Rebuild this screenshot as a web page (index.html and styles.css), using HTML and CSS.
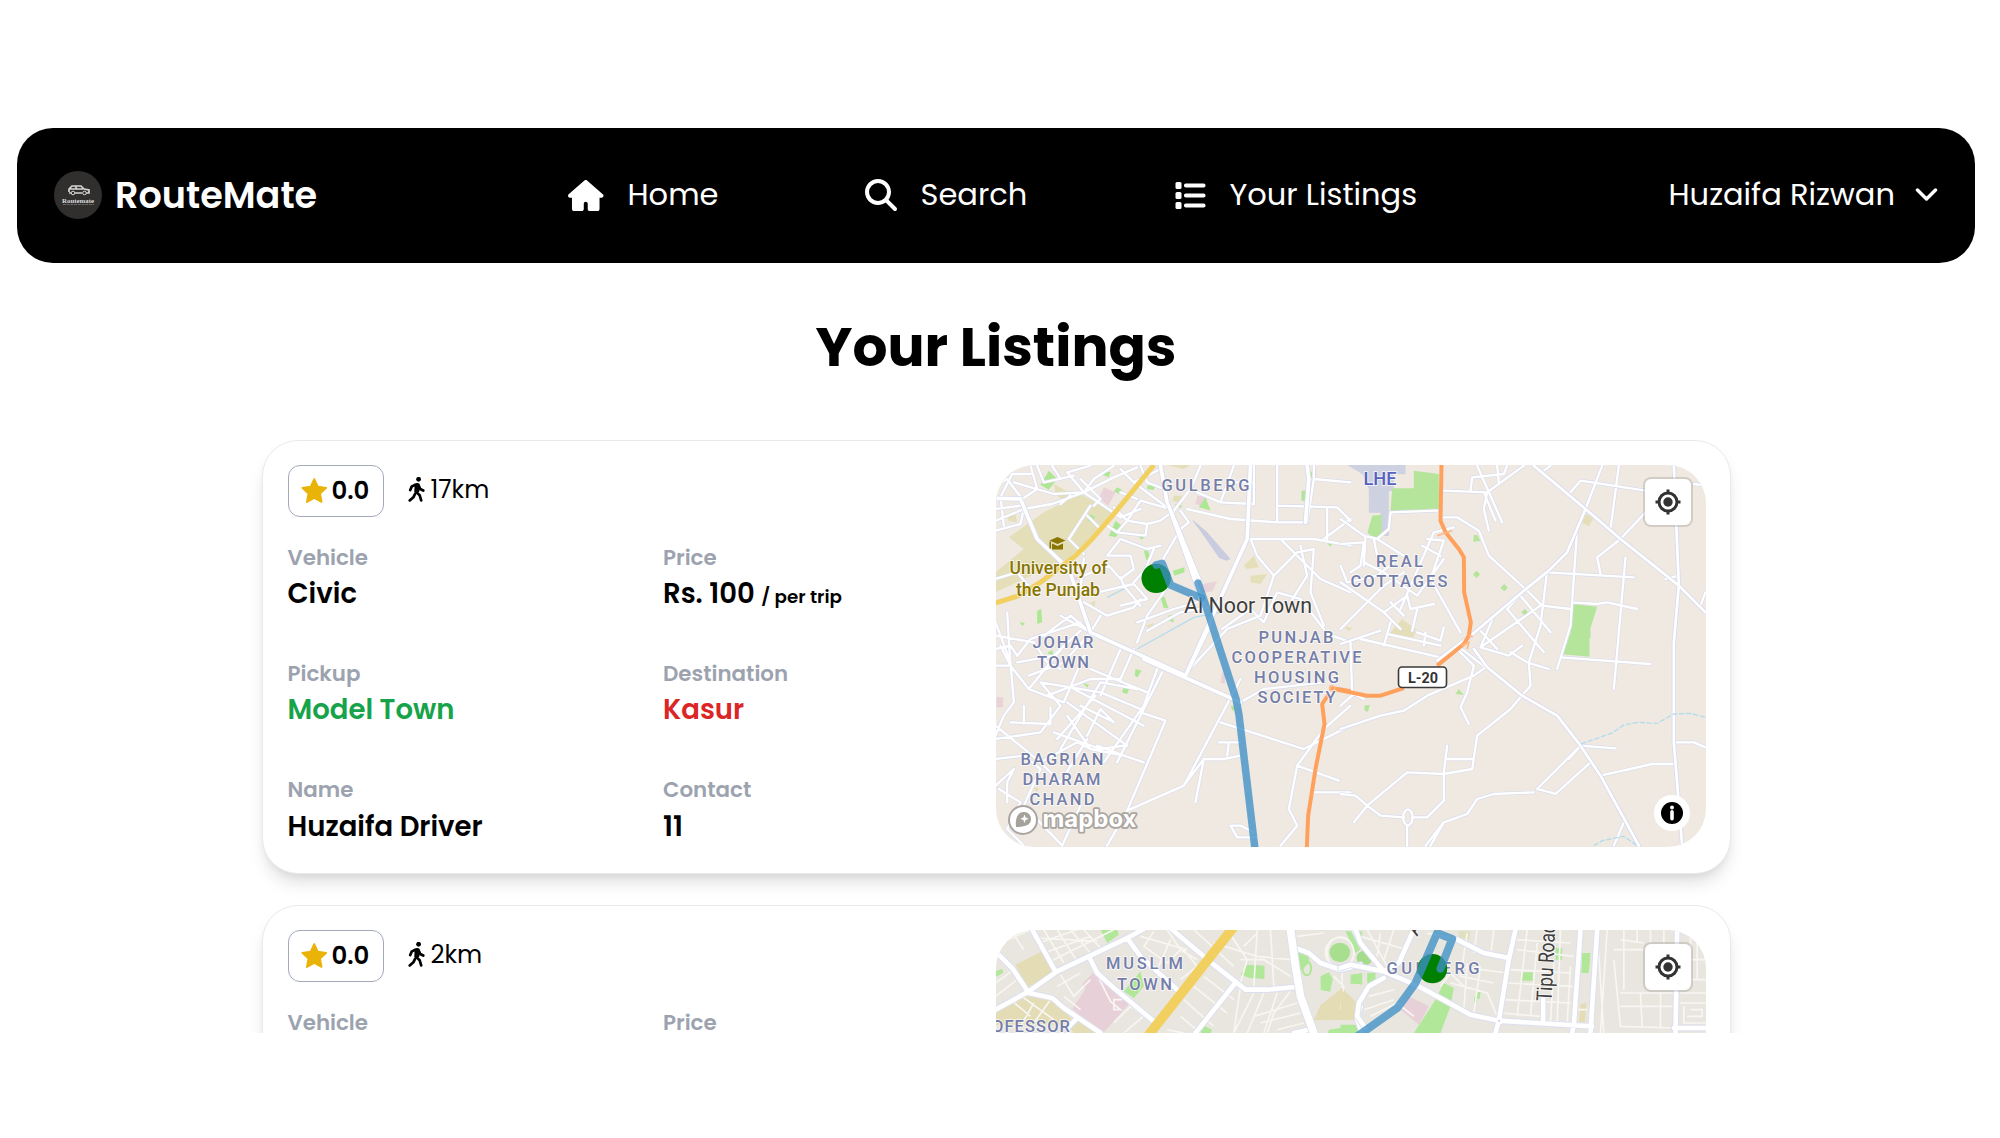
FILE: index.html
```html
<!DOCTYPE html>
<html lang="en">
<head>
<meta charset="utf-8">
<title>RouteMate - Your Listings</title>
<link rel="stylesheet" href="styles.css">
</head>
<body>
<div class="app">
  <header class="navbar">
    <a class="brand">
      <svg class="brand-logo" viewBox="0 0 48 48">
        <circle cx="24" cy="24" r="24" fill="#302f2e"/>
        <path d="M15 21v-3l3-3h9l3 3 5 1v3h-3m-4 0h-7m-4 0h-2M16 18h13M22 15v3" fill="none" stroke="#d4d4d4" stroke-width="1.700"/>
        <circle cx="19" cy="22" r="1.8" fill="none" stroke="#d4d4d4"/><circle cx="30.500" cy="22" r="1.8" fill="none" stroke="#d4d4d4"/>
        <text class="logo-name" x="8" y="31.500" textLength="32" lengthAdjust="spacingAndGlyphs">Routemate</text>
        <path d="M9 33.500h31" stroke="#777" stroke-width=".8" stroke-dasharray="3 .7"/>
      </svg>
      <span class="brand-name">RouteMate</span>
    </a>
    <nav class="links">
      <a class="link link-home">
        <svg class="icon-home" viewBox="0 0 576 512"><path fill="#fff" d="M575.800 255.500c0 18-15 32.100-32 32.100h-32l.7 160.200c0 2.700-.2 5.400-.5 8.100V472c0 22.100-17.900 40-40 40H360c-22.100 0-40-17.900-40-40v-88c0-17.700-14.300-32-32-32s-32 14.300-32 32v88c0 22.100-17.900 40-40 40h-112c-22.100 0-40-17.900-40-40V287.600H32c-18 0-32-14-32-32.100 0-9 3-17 10-24L266.400 8c7-7 15-8 22-8s15 2 21 7l255.400 224.500c8 7 12 15 11 24z"/></svg>
        <span>Home</span>
      </a>
      <a class="link link-search">
        <svg class="icon-search" viewBox="0 0 512 512"><path fill="#fff" d="M416 208c0 45.900-14.900 88.300-40 122.700L502.600 457.400c12.500 12.500 12.500 32.800 0 45.300s-32.800 12.500-45.300 0L330.700 376c-34.400 25.200-76.800 40-122.700 40C93.100 416 0 322.900 0 208S93.100 0 208 0s208 93.100 208 208zM208 352a144 144 0 1 0 0-288 144 144 0 1 0 0 288z"/></svg>
        <span>Search</span>
      </a>
      <a class="link link-listings">
        <svg class="icon-list" viewBox="0 0 30 27"><g fill="#fff"><rect width="6" height="7" rx="1.500"/><rect y="10" width="6" height="7" rx="1.500"/><rect y="20" width="6" height="7" rx="1.500"/><rect x="8.500" y="1.500" width="21.500" height="4" rx="1.800"/><rect x="8.500" y="11.500" width="21.500" height="4" rx="1.800"/><rect x="8.500" y="21.500" width="21.500" height="4" rx="1.800"/></g></svg>
        <span>Your Listings</span>
      </a>
    </nav>
    <a class="account">
      <span>Huzaifa Rizwan</span>
      <svg class="icon-chevron" viewBox="0 0 22 14"><path d="M2 2l9 9 9-9" fill="none" stroke="#fff" stroke-width="3.400" stroke-linecap="round" stroke-linejoin="round"/></svg>
    </a>
  </header>

  <h1 class="title">Your Listings</h1>

  <main class="listings">
    <article class="card">
      <section class="info">
        <div class="stats">
          <span class="rating"><svg class="icon-star" viewBox="0 0 26 25"><path d="M13 1l3.500 7.500 8.200 1.100-6 5.700 1.500 8.200-7.200-4-7.200 4 1.500-8.200-6-5.700 8.200-1.100z" fill="#eab308" stroke="#eab308" stroke-width="1.800" stroke-linejoin="round"/></svg><b>0.0</b></span>
          <span class="distance"><svg class="icon-walk" viewBox="0 0 16 24"><circle cx="10" cy="2.200" r="2.300"/><path d="M8.500 7l-1 7 3.500 3.500 1.500 5M6.500 16.500L5 19.500l-3.500 3M7 7.500L3.500 9 2 12.500M10 8l1.500 3.500 3 1.500" fill="none" stroke="#000" stroke-width="2.600" stroke-linecap="round" stroke-linejoin="round"/><path d="M6 6.500l4.500-.5 1 3-1 5.500-4.500.5z"/></svg><span>17km</span></span>
        </div>
        <dl class="fields">
          <div class="field"><dt>Vehicle</dt><dd>Civic</dd></div>
          <div class="field"><dt>Price</dt><dd>Rs. 100 <small>/ per trip</small></dd></div>
          <div class="field"><dt>Pickup</dt><dd class="green">Model Town</dd></div>
          <div class="field"><dt>Destination</dt><dd class="red">Kasur</dd></div>
          <div class="field"><dt>Name</dt><dd>Huzaifa Driver</dd></div>
          <div class="field"><dt>Contact</dt><dd>11</dd></div>
        </dl>
      </section>
      <div class="map">
        <svg class="map-canvas" viewBox="0 0 710 382">
          <defs>
            <g id="west-minor">
              <path d="M45 215L130 180 215 165 310 130 400 85 470 55M45 110L80 90 125 150 170 120 150 50M60 145L95 75 150 75M100 100L220 135 310 130 260 70 330 50M170 50L190 100 280 80M45 245L120 225 130 180M60 145L70 230M45 180L120 170M310 130L420 205 480 180M310 130L340 90 400 50M215 50L240 90M240 165L270 140M300 90L360 150 340 170M420 60L460 100 500 130 580 190M460 100L540 60M480 50L500 100 550 120M360 240L320 200M330 170L265 270 310 315M400 175L440 215 480 155 570 180M440 215L410 250 380 230M440 215L500 225 495 260 410 250M420 130L470 150M580 185L540 215 500 225M380 320L420 270 500 300 540 290M310 380L385 350 420 390 460 360 450 320 380 320M350 430L460 405 500 450 420 470M460 400L495 360 520 300M545 335L600 240 625 220 600 185M570 400L500 500 470 580M470 520L580 480 650 460M500 545L600 490 680 475M420 385L430 410 480 470M310 460L380 500 460 475 480 450M300 420L310 330M240 500L330 550 300 590M45 600L90 590 110 620 150 570 300 520M45 520L90 640 100 760 70 800 45 860M80 490L90 650 145 720 250 590M110 640L220 620 300 545M45 560L160 580 200 640 240 660M45 650L90 650 60 590M145 680L250 640 330 550M145 720L250 760 310 620M200 740L330 690 420 690 460 600M180 700L360 730 480 780M90 820L210 825 210 775M130 770L130 825M45 830L180 940 290 880 330 900 430 920M45 870L180 850 240 770 180 700M240 900L360 700 470 720M220 850L360 900 430 890M300 770L400 820 360 780 320 860M370 940L490 770 530 660M410 940L545 670M280 720L490 830M260 760L440 890M330 660L500 730M345 740L230 870M260 800L330 900M420 600L360 740M480 790L555 815 440 1085 380 1190M320 870L240 1000 180 940M350 890L430 920 490 940M45 930L130 920 180 960 130 1070 245 1190M45 1010L100 960 80 1000 80 1060M55 1020L120 1060 80 1140 130 1190M300 1070L245 1190M440 1085L610 1010 670 930 730 930 780 920M670 930L645 1060M715 880L780 880M745 880L740 920M610 1010L780 690M720 820L970 900 1110 830M1110 770L1030 840 950 950 925 1080 950 1130 900 1190M780 760L850 720 1030 700M950 950L1075 995M1000 1030L1110 1030M750 1130L770 1165 830 1165M750 1130L780 1130 820 1150M1055 710L1110 730M1030 550L1110 580M725 540L810 480 850 520 890 430 960 450 1030 540M800 270L1000 270 1110 290M900 270L1020 390 1110 430M950 310L880 380 840 500 740 540 610 680M1000 300L950 310 880 380 830 320 810 270M930 460L980 380 960 290M620 180L750 210 890 220 980 220 1000 90 1000 50M650 130L720 160 820 165 820 50M720 160L760 50M740 100L820 100M890 50L890 220M890 170L1070 175 1110 215M1030 270L1110 210M1000 300L990 430 1030 530M660 50L630 120 580 185M1110 100L1000 90M1040 180L1040 270M45 390L110 370 160 430M190 560L270 500 330 550 360 500"/>
            </g>
            <g id="west-major">
              <path d="M45 148L120 150 170 270 265 360 330 550M330 550L615 680 690 525M490 630L780 760M615 680L800 270 810 50M540 50L560 160 655 390M570 185L670 470M980 50L985 90 975 220"/>
            </g>
            <g id="east-minor">
              <path d="M0 210L70 260 110 270 190 320M0 285L70 280 60 350 30 370M0 350L20 400 110 380 160 340M70 340L130 370 230 440 310 330M0 400L130 490 180 540M0 540L130 410 190 370M75 260L70 350M100 270L110 320M180 480L280 250 340 235M245 290L300 320M260 270L310 275 270 390 360 550M130 490L200 440M150 520L130 590M200 440L210 480 280 465M230 480L215 545M150 460L190 500M0 585L120 545M60 570L300 625M140 555L300 590M230 550L300 575 310 535M255 550L250 590M30 580L35 740M0 770L40 735 70 750M0 840L120 800 190 785 260 740 400 680 435 655M350 600L400 650 380 730 360 775 385 825M310 125L440 130 550 50M410 50L485 220M430 130L465 215M440 130L430 180 445 245M390 125L395 85 490 75 500 50M470 50L475 100M310 205L350 205 415 245 445 320 555 420M555 420L500 480M555 420L605 470 690 480M500 480L610 610M540 440L630 550M460 500L420 595 505 620 545 590M420 545L470 600M510 610L560 640 625 660M600 470L420 595M620 365L600 530 565 640 570 710 510 780 410 860 395 960 310 975 200 970 80 1070 40 1120M320 890L310 970 310 1055 260 1105 215 1105M320 930L395 930M0 1035L45 1040 80 1070 120 1100 190 1105M200 1130L200 1190M150 190L290 185M150 190L145 240 110 270M690 130L720 95 915 125M785 50L735 180M835 50L810 240M1060 105L1095 110M915 190L840 270 770 325 780 375M620 370L880 385M855 325L820 720M695 460L770 465 800 460 890 480M660 625L930 645M710 240L690 530 650 660M720 890L825 898M720 890L590 1020 645 1035 750 940M720 890L685 930M780 980L935 945 1005 945M1005 880L1060 880 1095 895M975 390L1015 380M1095 430L1080 470M270 1190L310 1120 380 1095 410 1050 460 1035 580 1030M255 1190L310 1120M850 1120L820 1190M610 65L630 50M300 625L350 590 435 655"/>
              <ellipse cx="202" cy="1105" rx="14" ry="24"/>
            </g>
            <g id="east-major">
              <path d="M580 50L735 180 840 270 1015 410 1095 490M735 180L680 310 625 365 550 425 390 560 290 635M1000 50L1015 410 1000 580 1000 880 1025 1190M400 600L440 655 545 740 650 800 720 890 780 980 895 1190"/>
            </g>
          </defs>
          <rect width="710" height="382" fill="#efe9e1"/>
          <g transform="translate(-15.500 -16) scale(.33333)">
            <path fill="#e4dfb8" d="M85 265L190 190 300 135 400 190 280 320 45 430V370L130 300zM220 105l55 30-15 30-35-30zM790 350l30-30 15 35-35 5zM810 380l50-5-20 30-30-5zM495 530l25-8-10 18zM560 48h70l-20 12zM580 140h25v25l-30-10zM80 200l25-5 5 25-25-3zM155 1015l20 2-5 12zM330 460l15-5-3 25z"/>
            <path fill="#e9d3d9" d="M370 115l35 15-22 40-28-22zM650 140l30 5-5 30-30-10zM665 405l45-8-15 30-30 5zM725 670l12 5-5 30-12-5zM48 745h20v30H48zM265 380l30 5-20 25z"/>
            <path fill="#aee794" d="M205 65l25 25-25 32-25-15zM370 65l20 5-5 15-20-8zM410 115l15 8-10 12-15-8zM500 110l25-5-5 18-20-3zM325 195l20 8-12 18-12-8zM405 215l25 20-25 30-20-5zM475 265l20-8-10 15zM490 305l12-3 10 35-15-5zM577 365l35-10v15l-30 10zM540 445l12-2 12 35-15-2zM563 500l10-3 8 22-13-2zM170 485l12-5 3 40-15 5zM118 518l15 5-8 8zM200 612l15-8 5 18zM465 660l18 5-12 20-8-5zM430 710l18 5-8 20-15-5zM305 700l20 8-5 8zM655 175l20-30 15 40-15-5zM580 165l25 5-5 8zM990 68l15-3v20h-15zM963 125h15v30h-15zM750 770l15 5-8 12zM1040 283l15 2-5 8z"/>
            <path fill="#c9cce0" d="M633 210l46 38 71 82-12 5-22-8-50-72z"/>
            <path fill="none" stroke="#b4dcef" stroke-width="4" d="M470 600L640 505 720 490M380 445L460 405"/>
          </g>
          <g transform="translate(344.500 -16) scale(.33333)">
            <path fill="#cdd1e0" d="M20 48h175v28h-35v50h-15v135h-25v-70H85v-70L65 75z"/>
            <path fill="#b4e59a" d="M155 118h65V65l75 10v105l-145 10zM95 200l28-3v60l-15 17-27-23zM695 465l75 8-20 65v30h-25 22v55l-80-7 23-65zM400 258h10l10 18-22 2zM408 365l11 11-11 11-11-11zM491 405l11 11-11 11-11-11zM553 480l9 10-9 10-10-10zM345 735l10-15 15 18zM72 770l16-3-6 22-10-5z"/>
            <path fill="#e4dfb8" d="M185 510l40 30-5 25-75-10zM735 195l25 12-15 25-20-10zM10 532l25 5-10 10z"/>
          </g>
          <g class="roads minor" transform="translate(-15.500 -16) scale(.33333)"><use href="#west-minor" class="casing"/><use href="#west-minor"/></g>
          <g class="roads minor east" transform="translate(344.500 -16) scale(.33333)"><use href="#east-minor" class="casing"/><use href="#east-minor"/></g>
          <g class="roads major" transform="translate(-15.500 -16) scale(.33333)"><use href="#west-major" class="casing"/><use href="#west-major"/></g>
          <g class="roads major east" transform="translate(344.500 -16) scale(.33333)"><use href="#east-major" class="casing"/><use href="#east-major"/></g>
          <g fill="none" transform="translate(344.500 -16) scale(.33333)">
            <path stroke="#b4dcef" stroke-width="4" stroke-dasharray="16 5" d="M722 885L815 852 850 828 890 820 950 823 1000 795 1050 793 1095 805M760 1190L785 1175 850 1162 890 1190"/>
            <path stroke="#ffa15c" stroke-width="12" stroke-linejoin="round" d="M303 48L300 215 315 250 355 300 370 325 371 430 391 520 385 560 370 585 290 650M190 717L120 740H80L-30 718"/>
            <path stroke="#ffb785" stroke-width="5" d="M290 260l45-15M365 590l20-10-5 20M385 558l12 5"/>
          </g>
          <g fill="none" transform="translate(-15.500 -16) scale(.33333)">
            <path stroke="#e7d9a6" stroke-width="16" d="M520 48L400 195 330 275 285 320 180 400 115 440 45 462"/>
            <path stroke="#f3d05c" stroke-width="13" d="M520 48L400 195 330 275 285 320 180 400 115 440 45 462"/>
            <path stroke="#ffa15c" stroke-width="12" stroke-linejoin="round" d="M1055 717L1110 727M1045 735L1025 765 1032 825 1005 960 983 1100 979 1195"/>
            <circle cx="1055" cy="718" r="8" stroke="#ffb785" stroke-width="4"/>
            <circle cx="527" cy="388" r="44" fill="#008000"/>
            <path d="M527 348L545 343 570 408 662 447" stroke="#3d8fc7" stroke-opacity=".78" stroke-width="23" stroke-linecap="round" stroke-linejoin="round"/>
          </g>
          <g class="labels">
            <text class="district" x="165.500" y="26" textLength="88">GULBERG</text>
            <text class="district" x="36.500" y="183" textLength="61">JOHAR</text>
            <text class="district" x="41" y="203" textLength="52">TOWN</text>
            <text class="district" x="24.500" y="299.500" textLength="83">BAGRIAN</text>
            <text class="district" x="26.500" y="320" textLength="78">DHARAM</text>
            <text class="district" x="33.500" y="340" textLength="65">CHAND</text>
            <text class="district" x="262.500" y="177.500" textLength="75">PUNJAB</text>
            <text class="district" x="235.500" y="197.500" textLength="130">COOPERATIVE</text>
            <text class="district" x="258" y="217.500" textLength="85">HOUSING</text>
            <text class="district" x="261.500" y="238" textLength="78">SOCIETY</text>
            <text class="district" x="380" y="101.500" textLength="47">REAL</text>
            <text class="district" x="354.500" y="121.500" textLength="97">COTTAGES</text>
            <text class="airport" x="367.500" y="20" textLength="33" lengthAdjust="spacingAndGlyphs">LHE</text>
            <text class="campus" x="13.500" y="109" textLength="98" lengthAdjust="spacingAndGlyphs">University of</text>
            <text class="campus" x="20" y="131" textLength="84" lengthAdjust="spacingAndGlyphs">the Punjab</text>
            <text class="town" x="188" y="147.500" textLength="128" lengthAdjust="spacingAndGlyphs">Al Noor Town</text>
          </g>
          <path fill="#8a7500" d="M61.500 72l8 3.500-8 3.500-8-3.500zM56 78.500l5.500 2.500 5.500-2.500v6H56zM53.500 76.500h1.500v7h-1.500z"/>
          <path d="M202 118L209 138 240 234 243 250 259 384" fill="none" stroke="#3d8fc7" stroke-opacity=".78" stroke-width="7.500" stroke-linecap="round" stroke-linejoin="round"/>
          <rect x="402.500" y="202" width="48" height="20.500" rx="3.500" fill="#fff" stroke="#3a3a3a" stroke-width="1.600"/>
          <text class="shield" x="412" y="217.500" textLength="30" lengthAdjust="spacingAndGlyphs">L-20</text>
          <g class="mapbox-mark">
            <circle cx="27" cy="355" r="14" fill="#fff" stroke="#a9a49f" stroke-width="2"/>
            <path d="M20 362c-1-9 2-15 8-15 4 0 7 3 7 7 0 6-6 8-15 8z" fill="#a5a19b"/>
            <path d="M28.500 349.500l1.200 3 3 1.200-3 1.200-1.200 3-1.200-3-3-1.200 3-1.200z" fill="#fff"/>
            <text x="46.500" y="362" textLength="94" lengthAdjust="spacingAndGlyphs">mapbox</text>
          </g>
        </svg>
        <button class="locate"><svg viewBox="0 0 26 26"><g fill="none" stroke="#333" stroke-width="3"><circle cx="13" cy="13" r="9"/><path d="M13 .5v4M13 21.500v4M.5 13h4M21.500 13h4"/></g><circle cx="13" cy="13" r="4.700" fill="#333"/></svg></button>
        <span class="attribution"><svg viewBox="0 0 36 36"><circle cx="18" cy="18" r="18" fill="#fff"/><circle cx="18" cy="18" r="11"/><circle cx="18" cy="12.500" r="1.900" fill="#fff"/><path d="M18 16.800v7" stroke="#fff" stroke-width="3.600" stroke-linecap="round"/></svg></span>
      </div>
    </article>

    <article class="card">
      <section class="info">
        <div class="stats">
          <span class="rating"><svg class="icon-star" viewBox="0 0 26 25"><path d="M13 1l3.500 7.500 8.200 1.100-6 5.700 1.500 8.200-7.200-4-7.200 4 1.500-8.200-6-5.700 8.200-1.100z" fill="#eab308" stroke="#eab308" stroke-width="1.800" stroke-linejoin="round"/></svg><b>0.0</b></span>
          <span class="distance"><svg class="icon-walk" viewBox="0 0 16 24"><circle cx="10" cy="2.200" r="2.300"/><path d="M8.500 7l-1 7 3.500 3.500 1.500 5M6.500 16.500L5 19.500l-3.500 3M7 7.500L3.500 9 2 12.500M10 8l1.500 3.500 3 1.500" fill="none" stroke="#000" stroke-width="2.600" stroke-linecap="round" stroke-linejoin="round"/><path d="M6 6.500l4.500-.5 1 3-1 5.500-4.500.5z"/></svg><span>2km</span></span>
        </div>
        <dl class="fields">
          <div class="field"><dt>Vehicle</dt></div>
          <div class="field"><dt>Price</dt></div>
        </dl>
      </section>
      <div class="map">
        <svg class="map-canvas" viewBox="0 0 710 382">
          <defs>
            <g id="city-west">
              <path d="M155 90L225 215M45 155L95 205 145 280 215 295 250 325 360 400M45 330L145 275 230 215 440 115 490 88M440 115L480 170 590 270M330 180L350 220 400 265 520 365M575 90L700 195 795 270 860 270 945 262M760 255L645 400M945 145L985 160 1020 190 1080 210 1140 195M1120 90L1145 140M940 400L985 390M290 355L260 385M1140 320L1130 360 1145 400"/>
            </g>
            <g id="city-east">
              <path d="M0 205L30 195 130 215 235 260 290 290 390 345 475 363 755 380M45 90L60 130 130 215M130 215L175 190 215 100M130 235L85 260 55 310 50 350 75 385M350 120L430 160 505 175M525 90L505 180 475 363 465 400M720 90L700 375 695 400M770 90L750 400M608 300L608 365M1010 90L1005 400M1000 385H1095"/>
            </g>
          </defs>
          <rect width="710" height="382" fill="#e9e6df"/>
          <g transform="translate(-15.500 -30.300) scale(.33333)">
            <path fill="#e3dcb5" d="M105 195l80-40 35 60-80 50zM45 340l95-55 75 10 60 65-30 15H45zM270 385l25-25 60 40h-75zM1085 265l50 50v45l-135 2 20-45z"/>
            <path fill="#e8d0d9" d="M340 218l110 90-45 50-35 40-95-70 40-60-10-15z"/>
            <path fill="#b1e798" d="M360 90h50l5 15-35 25zM45 215l20-8 3 12-20 12zM430 275l50-60 10 45-30 35zM780 225l20-30 52 3v40l-45-3zM650 400l20-22 25 12-5 10zM950 155l35 15v20l-25 25zM1020 230l25-12 12 20-8 38-28-5zM1115 225l30-5v35l-30-5zM1045 390l100-15v30h-105zM1100 100l45-5v40l-20 15z"/>
            <ellipse cx="1078" cy="158" rx="31" ry="29" fill="#a8df8e"/>
            <ellipse cx="979" cy="206" rx="13" ry="21" fill="none" stroke="#aee794" stroke-width="6"/>
            <path class="lanes" d="M170 115L350 125M190 90L250 190M230 90L290 185M270 90L330 160M310 90L360 145M175 130L290 90M190 160L330 110M210 185L400 90M90 90L130 150M60 130L150 90M45 290L110 240M45 250L100 210M240 225L280 290 330 240M250 290L300 330M230 260L300 220M480 110L620 150M520 95L490 140 560 190 600 150 650 180M560 90L600 150M530 210L570 120M600 240L650 200 610 150M610 300L700 380M640 260L740 340M670 230L760 300M600 350L660 400M560 390L610 400M640 90L760 200M700 130L830 170 930 180M740 90L800 180 780 250M830 90L820 260M870 90L880 260M780 180H850L930 230M790 140L830 100M950 110L1030 100M780 260L760 400M820 280L760 400M850 280L800 400M890 280L850 400M930 275L880 340 860 400M950 310L820 350M960 340L840 370M970 370L890 390M400 370L450 320 520 370M430 400L500 340M90 300L150 350M110 280L220 360M160 310L120 380M210 300L160 370M1060 230L1090 260 1080 330M1085 220V265"/>
            <ellipse class="lanes" cx="1078" cy="158" rx="43" ry="44"/>
            <path class="lanes" d="M355 235l20 40 15 30 30 25h-20v-30h25"/>
          </g>
          <g transform="translate(344.500 -30.300) scale(.33333)">
            <path fill="#e3dcb5" d="M0 265l50 60-5 30H0zM720 312l18-2-5 58h-18z"/>
            <path fill="#e8d0d9" d="M205 290l60 30-30 55-55-45z"/>
            <path fill="#b1e798" d="M285 300l25-50 30 15-10 55-30 80h-80zM15 95h35l15 50-20 15zM30 225l30-3v30H30zM80 220h25v30H80zM0 375h55v30H0zM545 218h32v25h-35zM725 160h25l-5 60h-22zM645 145h20v35h-20zM408 272l12 5-2 20h-12zM402 290l8 3-2 17h-8z"/>
            <circle cx="0" cy="160" r="26" fill="#a8df8e"/><ellipse cx="72" cy="175" rx="24" ry="22" fill="#a4dc8b"/>
            <path fill="#dfe0bd" d="M355 95h35l-5 25-30-5z"/>
            <path class="lanes" d="M60 110L200 150M80 90L140 200M120 100L110 170M160 90L130 180M85 290L160 270M70 330L160 300M90 350L170 310 220 350M260 100L350 120M380 100L360 230 460 250M410 90L400 160M460 90L450 170M350 200L500 220M330 250L440 280 470 350M380 190L370 330M420 200L400 340M300 260L330 220 370 260M530 120L690 130M530 150L700 170M510 210L690 220M500 250L700 260M490 300L690 310M480 340L600 350M560 90L530 350M590 130L570 350M640 190L630 370M660 90L650 370M690 200L680 370M700 330H740M770 90L790 400M800 90L780 400M820 180L840 380 1000 385M840 280H1000M840 320H1000M900 280L905 380M960 280V385M840 120L910 130M850 90V270M890 90V130M930 90V130M970 90V130M820 150H910M1010 240H1095M1020 310H1095M1030 320V370H1095M1050 330H1085V350H1040M1050 90V240M1070 120V240M1030 180H1095M1020 280H1095"/>
            <ellipse class="lanes" cx="0" cy="160" rx="40" ry="48"/>
          </g>
          <g class="roads city" transform="translate(-15.500 -30.300) scale(.33333)"><use href="#city-west" class="casing"/><use href="#city-west"/>
            <path d="M930 90L945 200 960 290 1000 400" stroke="#dcdff0" stroke-width="28"/><path d="M930 90L945 200 960 290 1000 400" stroke-width="23"/>
            <path d="M757 85L505 405" stroke="#f2d05f" stroke-width="29"/></g>
          <g class="roads city east" transform="translate(344.500 -30.300) scale(.33333)"><use href="#city-east" class="casing"/><use href="#city-east"/><circle cx="476" cy="363" r="4" fill="#c5c9dd"/></g>
          <g class="labels">
            <text class="district" x="110" y="39" textLength="77">MUSLIM</text>
            <text class="district" x="121" y="60" textLength="55">TOWN</text>
            <text class="district" x="-4" y="102" textLength="78">OFESSOR</text>
            <text class="district" x="390.500" y="43.500" textLength="93">GULBERG</text>
            <text class="town" transform="translate(555.500 71.500) rotate(-87)" textLength="78" lengthAdjust="spacingAndGlyphs">Tipu Road</text>
            <text class="town" transform="translate(421 7) rotate(-60)">A</text>
          </g>
          <g fill="none" transform="translate(344.500 -30.300) scale(.33333)">
            <circle cx="276" cy="207" r="44" fill="#008000"/>
            <path d="M300 207L335 118 290 100 225 250 170 325 50 410" stroke="#3d8fc7" stroke-opacity=".78" stroke-width="24" stroke-linecap="round" stroke-linejoin="round"/>
          </g>
        </svg>
        <button class="locate"><svg viewBox="0 0 26 26"><g fill="none" stroke="#333" stroke-width="3"><circle cx="13" cy="13" r="9"/><path d="M13 .5v4M13 21.500v4M.5 13h4M21.500 13h4"/></g><circle cx="13" cy="13" r="4.700" fill="#333"/></svg></button>
      </div>
    </article>
  </main>
</div>
</body>
</html>
```
FILE: styles.css
```css
* { box-sizing: border-box; }
html { background: #fff; }
body { margin: 0; padding-top: 128px; font-family: Poppins, Inter, sans-serif; color: #000; height: 1138px; overflow: hidden; }
svg { display: block; flex: none; }
.app { height: 905px; overflow: hidden; }

.navbar { display: flex; align-items: center; height: 134.500px; margin: 0 25px 0 17px; padding: 0 37px 0 37px; background: #000; color: #fff; border-radius: 36px; }
.brand { display: flex; align-items: center; gap: 13px; width: 514px; }
.brand-logo { width: 48px; height: 48px; }
.logo-name { font: 700 6px "Liberation Serif", serif; fill: #ddd; }
.brand-name { font-size: 36.600px; font-weight: 600; white-space: nowrap; }
.links { display: flex; align-items: center; flex: 1; }
.link { display: flex; align-items: center; white-space: nowrap; }
.link span, .account span { font-size: 30.500px; }
.link-home { gap: 24px; width: 296.500px; }
.link-search { gap: 24px; width: 310px; }
.link-listings { gap: 24px; }
.icon-home { width: 35.500px; height: 31.500px; }
.icon-search { width: 32px; height: 32px; }
.icon-list { width: 31px; height: 27px; }
.account { display: flex; align-items: center; gap: 20px; white-space: nowrap; }
.icon-chevron { width: 23px; height: 14px; }

.title { margin: 0; padding: 40.500px 8px 0 0; height: 177.500px; line-height: 88px; text-align: center; font-size: 55px; font-weight: 700; }

.listings { display: flex; flex-direction: column; gap: 31px; width: 1468.500px; margin-left: 262px; }
.card { display: flex; justify-content: space-between; flex: none; height: 434px; padding: 24px 24px 24px 24.500px; background: #fff; border: 1.500px solid #e8eaee; border-radius: 36px; box-shadow: 0 12px 18px -4px rgba(0,0,0,.13), 0 4px 8px -3px rgba(0,0,0,.08); }
.info { width: 690px; }
.stats { display: flex; gap: 23.500px; height: 52px; }
.rating { display: flex; align-items: center; gap: 4px; width: 96.500px; height: 52px; padding-left: 12.500px; border: 1.500px solid #a3a9b8; border-radius: 12px; }
.icon-star { width: 26.500px; height: 25.500px; }
.rating b { font-size: 24.400px; font-weight: 600; line-height: 48px; }
.distance { display: flex; align-items: center; gap: 6px; height: 48px; font-size: 24.400px; }
.icon-walk { width: 17px; height: 25px; }

.fields { display: grid; grid-template-columns: 375.500px 1fr; grid-auto-rows: 116.300px; margin: 24.500px 0 0; }
dt { font-size: 21.400px; line-height: 32px; font-weight: 600; color: #9ca3af; }
dd { margin: .5px 0 0; font-size: 27.500px; line-height: 40px; font-weight: 600; white-space: nowrap; }
dd small { font-size: 18.300px; }
.green { color: #16a34a; }
.red { color: #dc2626; }

.map { position: relative; width: 710px; height: 382px; border-radius: 38px; overflow: hidden; }
.map-canvas { width: 710px; height: 382px; }
.roads { fill: none; stroke: #fff; stroke-linejoin: round; stroke-linecap: round; }
.minor { stroke-width: 7; }
.minor .casing { stroke: #d9dcee; stroke-width: 11; }
.major { stroke-width: 11; }
.major .casing { stroke: #d8dbef; stroke-width: 16; }
.east.major { stroke-width: 8; }
.east.major .casing { stroke-width: 13; }
.city { stroke-width: 14; }
.city .casing { stroke: #dcdff0; stroke-width: 20; }
.lanes { fill: none; stroke: #f8f6f3; stroke-width: 5; }
.labels text { stroke: rgba(255,255,255,.7); stroke-width: 2px; paint-order: stroke; stroke-linejoin: round; }
.district { font: 500 16.500px Roboto, sans-serif; fill: #757ea9; }
.airport { font: 500 18px Roboto, sans-serif; fill: #5662bd; }
.campus { font: 500 18px Roboto, sans-serif; fill: #887400; }
.town { font: 400 21.500px Roboto, sans-serif; fill: #3e3e3e; }
.shield { font: 700 15px Roboto, sans-serif; fill: #333; }
.mapbox-mark text { font: 700 24px Inter, sans-serif; fill: #fff; stroke: #aaa5a0; stroke-width: 3.500px; paint-order: stroke; stroke-linejoin: round; }
.locate { position: absolute; top: 14px; right: 15px; width: 46px; height: 46px; display: grid; place-items: center; padding: 0; border: 0; border-radius: 6px; background: #fff; box-shadow: 0 0 0 2px rgba(0,0,0,.12); }
.locate svg { width: 26px; height: 26px; }
.attribution { position: absolute; right: 16px; bottom: 16px; }
.attribution svg { width: 36px; height: 36px; }
```
